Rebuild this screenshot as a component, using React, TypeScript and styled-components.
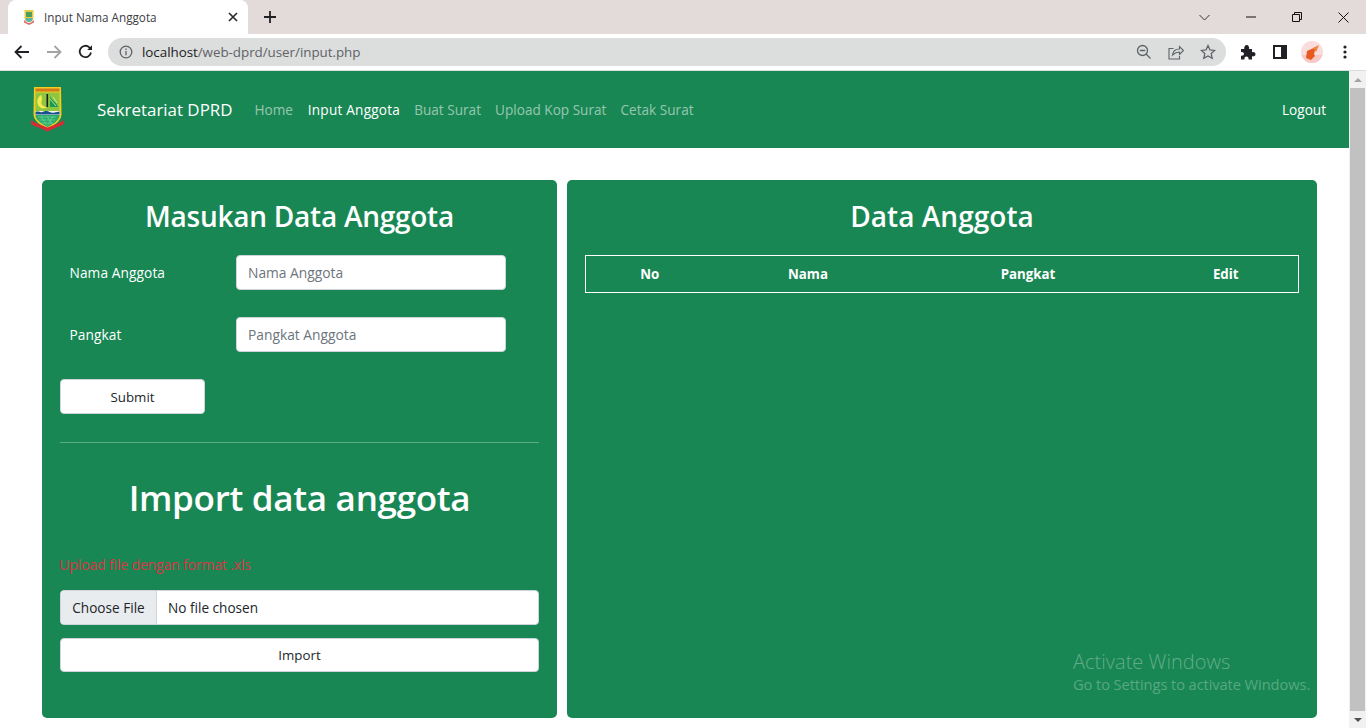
import React from "react";
import styled, { createGlobalStyle } from "styled-components";

const Global = createGlobalStyle`
  html, body { margin: 0; padding: 0; height: 100%; overflow: hidden; background: #fff; }
  body { font-family: "Open Sans", "Noto Sans", "Liberation Sans", sans-serif; }
  * { box-sizing: border-box; }
`;

const Shell = styled.div`
  width: 1366px; height: 728px; display: flex; flex-direction: column; position: relative; overflow: hidden;
`;
const TitleBar = styled.div`
  height: 34px; background: #e3dbd9; display: flex; align-items: flex-end; padding-left: 8px; flex: none;
`;
const Tab = styled.div`
  width: 240px; height: 34px; background: #fff; border-radius: 8px 8px 0 0; display: flex; align-items: center; padding: 0 10px 0 16px; gap: 10px;
`;
const TabTitle = styled.span`
  flex: 1; font-size: 11.7px; color: #3c4043; white-space: nowrap;
`;
const NewTab = styled.div`
  width: 28px; height: 28px; margin: 0 0 3px 8px; display: flex; align-items: center; justify-content: center;
`;
const WindowControls = styled.div`
  margin-left: auto; height: 34px; display: flex; align-items: center;
`;
const WinButton = styled.div<{ $w: number }>`
  width: ${(p) => p.$w}px; display: flex; align-items: center; justify-content: center; height: 28px;
`;
const Toolbar = styled.div`
  height: 37px; flex: none; background: #fff; border-bottom: 1px solid #dadce0; display: flex; align-items: center; padding: 0 11px 1px 14px;
`;
const NavIcons = styled.div`
  display: flex; align-items: center; gap: 16px; width: 94px;
`;
const Omnibox = styled.div`
  width: 1118px; height: 28px; background: #dcdddd; border-radius: 14px; display: flex; align-items: center; padding: 0 10px 0 11px; gap: 9px;
`;
const Url = styled.span`
  flex: 1; font-size: 13.4px; color: #5f6368; letter-spacing: -0.04px;
  b { font-weight: 400; color: #202124; }
`;
const OmniIcons = styled.div`
  display: flex; align-items: center; gap: 16px;
`;
const ToolIcons = styled.div`
  display: flex; align-items: center; margin-left: 14px;
`;
const ToolSlot = styled.div<{ $gap: number }>`
  margin-left: ${(p) => p.$gap}px; display: flex; align-items: center;
`;
const Avatar = styled.div`
  width: 22px; height: 22px; border-radius: 50%; background: #f9dcdc; overflow: hidden; display: flex;
`;
const Viewport = styled.div`
  flex: 1; display: flex; min-height: 0;
`;
const Page = styled.div`
  flex: 1; display: flex; flex-direction: column; background: #fff; min-width: 0;
`;
const Navbar = styled.nav`
  height: 77px; flex: none; background: #198754; display: flex; align-items: center; padding: 0 23px 0 31px;
`;
const Brand = styled.a`
  color: #fff; font-size: 16.9px; margin-left: 33px; margin-right: 22px; white-space: nowrap;
`;
const NavLinks = styled.div`
  display: flex; gap: 14.1px; flex: 1;
`;
const NavLink = styled.a<{ $active?: boolean }>`
  color: ${(p) => (p.$active ? "#fff" : "rgba(255,255,255,.55)")};
  font-size: 13.6px; white-space: nowrap;
  font-weight: ${(p) => (p.$active ? 500 : 400)};
  letter-spacing: ${(p) => (p.$active ? "0.22px" : "0")};
  margin-left: ${(p) => (p.$active ? "0.8px" : "0")};
`;
const Logout = styled.a`
  color: #fff; font-size: 13.6px;
`;
const Content = styled.main`
  flex: 1; display: flex; gap: 10px; padding: 32px 32px 10px 42px; min-height: 0;
`;
const Card = styled.section<{ $w: number }>`
  width: ${(p) => p.$w}px; background: #198754; border-radius: 5px; padding: 17px 18px 0; color: #fff;
`;
const CardTitle = styled.h2<{ $tracking: number }>`
  margin: 0; text-align: center; font-size: 28px; font-weight: 600; line-height: 38px; height: 58px; letter-spacing: ${(p) => p.$tracking}px;
`;
const FormRow = styled.div`
  display: flex; align-items: center; height: 34.5px; margin-bottom: 27.5px; padding-left: 10px;
`;
const FieldLabel = styled.label`
  width: 166px; font-size: 13.7px; font-weight: 500; letter-spacing: 0.1px; margin-left: -0.5px;
`;
const TextField = styled.div`
  width: 270px; height: 34.5px; margin-left: 0.5px; background: #fff; border: 1px solid #ced4da; border-radius: 4px; font-size: 13.8px; color: #6c757d; display: flex; align-items: center; padding: 0 11px 0.5px;
`;
const WhiteButton = styled.button<{ $full?: boolean }>`
  display: block; width: ${(p) => (p.$full ? "100%" : "145px")}; height: ${(p) => (p.$full ? "34px" : "35px")};
  background: #fff; border: 1px solid #ced4da; border-radius: 4px; font: inherit; font-size: 13.3px; color: #212529; padding: 0;
`;
const Divider = styled.hr`
  border: 0; border-top: 1px solid rgba(255,255,255,.3); margin: 28px 0 0;
`;
const BigTitle = styled.h1`
  margin: 30px 0 0; text-align: center; font-size: 35px; font-weight: 600; line-height: 50px; height: 82px; letter-spacing: -0.3px;
`;
const Warning = styled.p`
  margin: 0 0 0 -0.7px; font-size: 13.9px; line-height: 20px; color: #dc3545; height: 35px; letter-spacing: -0.1px;
`;
const FileField = styled.div`
  height: 35px; background: #fff; border: 1px solid #ced4da; border-radius: 4px; display: flex; align-items: stretch; font-size: 13.6px; color: #212529; margin-bottom: 13px; overflow: hidden;
`;
const FileButton = styled.span`
  width: 96px; background: #e9ecef; border-right: 1px solid #ced4da; display: flex; align-items: center; justify-content: center; flex: none;
`;
const FileName = styled.span`
  display: flex; align-items: center; padding-left: 11px;
`;
const DataTable = styled.table`
  width: 713px; border-collapse: collapse; border: 1px solid #fff; table-layout: fixed;
  th { height: 37px; font-size: 13.3px; font-weight: 700; text-align: center; padding: 0; }
`;
const Scrollbar = styled.div`
  width: 17px; flex: none; background: #f1f1f1; display: flex; flex-direction: column; align-items: center;
`;
const ScrollArrow = styled.div<{ $down?: boolean }>`
  height: 17px; flex: none; display: flex; align-items: center; justify-content: center;
  &::before {
    content: ""; border-left: 4px solid transparent; border-right: 4px solid transparent;
    ${(p) => (p.$down ? "border-top: 4px solid #505050;" : "border-bottom: 4px solid #a3a3a3;")}
  }
`;
const ScrollThumb = styled.div`
  width: 15px; flex: 1; background: #c1c1c1;
`;
const Watermark = styled.div`
  position: absolute; left: 1073px; top: 649px; color: rgba(255,255,255,.33); pointer-events: none; white-space: nowrap;
`;
const WatermarkTitle = styled.div`
  font-size: 20px; line-height: 25px; font-weight: 300; letter-spacing: 0.02px;
`;
const WatermarkSub = styled.div`
  font-size: 14.7px; line-height: 20px; letter-spacing: -0.1px; color: rgba(255,255,255,.28);
`;

const Crest = () => (
  <svg width="33" height="46" viewBox="0 0 33 46" style={{ flex: "none", display: "block" }}>
    <path d="M3 0h27l.5 27c0 7-7 11-14 15C9.500 38 2.500 34 2.500 27z" fill="#f4cb1f" />
    <path d="M4.500 1.500h24v3h-24z" fill="#cf7a1c" />
    <path d="M4.500 5.500h24V24h-24z" fill="#8ec63f" />
    <path d="M10 8c-5 3-5 10 0 13 3 1 5 0 6-1-4 0-7-3-5-7 0-2 0-3-1-5z" fill="#f6ea4f" />
    <rect x="15.500" y="7" width="1.600" height="13" fill="#1c1c1c" />
    <path d="M19 9c1 4 6 5 8 11h-8z" fill="#179a55" />
    <path d="M19 12l6 7M22 10l4 6" stroke="#e9f0a0" strokeWidth="0.800" />
    <path d="M4.500 24h24v4h-24z" fill="#f6f6f0" />
    <path d="M4.500 25c3-1.500 4 1 7 0s4-1.500 7 0 5 .5 10-.5v3h-24z" fill="#17508f" />
    <path d="M4.500 28h24c0 5-6 9-12 12-6-3-12-7-12-12z" fill="#27ad6a" />
    <path d="M7 30l18 0M8 33h16M10 36h12M10 29l6 10M16 29l5 8M22 29l-5 9" stroke="#8fdcae" strokeWidth="0.500" />
    <path d="M.5 33c2 2 6 4 8 4.500l8 3 8-3c2-.5 6-2.500 8-4.500l.5 4-4.500 2.500-3.500 1-8.500 4-8.500-4-3.500-1L0 37z" fill="#d92b33" />
  </svg>
);

const Favicon = () => (
  <svg width="10" height="15" viewBox="0 0 10 15" style={{ flex: "none", display: "block" }}>
    <path d="M.5 0h9v8c0 2-2 3-4.500 4C2.500 11 .5 10 .5 8z" fill="#e8cc46" />
    <path d="M2 2h6v5H2z" fill="#4f9d5d" />
    <path d="M1.500 8h7v2c0 1-2 2-3.500 2s-3.500-1-3.500-2z" fill="#5fb5a0" />
    <path d="M0 10c2 2 3.500 3 5 3s3-1 5-3v2.500L5 15 0 12.500z" fill="#e46a62" />
  </svg>
);

const Stroke = ({ w = 16, h = 16, vb = "0 0 16 16", color = "#202124", sw = 1.5, children }: any) => (
  <svg width={w} height={h} viewBox={vb} fill="none" stroke={color} strokeWidth={sw} style={{ flex: "none", display: "block" }}>
    {children}
  </svg>
);

export default function App() {
  return (
    <Shell>
      <Global />
      <TitleBar>
        <Tab>
          <Favicon />
          <TabTitle>Input Nama Anggota</TabTitle>
          <Stroke w={10} h={10} vb="0 0 10 10" sw={1.7} color="#2b2b2b"><path d="M1 1l8 8M9 1l-8 8" /></Stroke>
        </Tab>
        <NewTab>
          <Stroke w={12} h={12} vb="0 0 12 12" sw={1.800}><path d="M6 0v12M0 6h12" /></Stroke>
        </NewTab>
        <WindowControls>
          <WinButton $w={40}><Stroke w={11} h={7} vb="0 0 11 7" sw={1} color="#333"><path d="M.5 1l5 5 5-5" /></Stroke></WinButton>
          <WinButton $w={46} style={{ marginLeft: 4 }}><Stroke w={10} h={2} vb="0 0 10 2" sw={1} color="#111"><path d="M0 1h10" /></Stroke></WinButton>
          <WinButton $w={46}><Stroke w={10} h={10} vb="0 0 10 10" sw={1} color="#111"><path d="M.5 2.500h7v7h-7zM2.500 2.500v-2h7v7h-2" /></Stroke></WinButton>
          <WinButton $w={46}><Stroke w={11} h={11} vb="0 0 11 11" sw={1} color="#111"><path d="M.5.5l10 10M10.500.5l-10 10" /></Stroke></WinButton>
        </WindowControls>
      </TitleBar>
      <Toolbar>
        <NavIcons>
          <Stroke w={16} h={14} vb="0 0 16 14" sw={1.800}><path d="M15 7H2M7.500 1 1.500 7l6 6" /></Stroke>
          <Stroke w={16} h={14} vb="0 0 16 14" sw={1.800} color="#a2a4a6"><path d="M1 7h13M8.500 1l6 6-6 6" /></Stroke>
          <Stroke w={15} h={15} vb="0 0 15 15" sw={1.800}><path d="M13 8.500A5.700 5.700 0 1 1 11.300 3.300L13.500 5.500" /><path d="M14 1.200V6H9.200z" fill="#202124" stroke="none" /></Stroke>
        </NavIcons>
        <Omnibox>
          <Stroke w={14} h={14} vb="0 0 14 14" sw={1.300} color="#5f6368"><circle cx="7" cy="7" r="5.800" /><path d="M7 6v4.200M7 3.500v1.500" /></Stroke>
          <Url><b>localhost</b>/web-dprd/user/input.php</Url>
          <OmniIcons>
            <Stroke w={16} h={16} vb="0 0 16 16" sw={1.300} color="#5f6368"><circle cx="6.500" cy="6.500" r="5" /><path d="M3.800 6.500h5.400M10 10l4.500 4.500" /></Stroke>
            <Stroke w={16} h={16} vb="0 0 16 16" sw={1.100} color="#5f6368"><path d="M5.500 4.500H1v10.500h10.500v-3" /><path d="M4.500 11c.5-4 3-6 7-6V2.500l4 4-4 4V8c-3 0-5 1-7 3z" /></Stroke>
            <Stroke w={16} h={16} vb="0 0 16 16" sw={1.300} color="#5f6368"><path d="M8 1.500l2 4.400 4.700.5-3.500 3.200 1 4.700L8 11.900l-4.200 2.400 1-4.700L1.300 6.400 6 5.900z" /></Stroke>
          </OmniIcons>
        </Omnibox>
        <ToolIcons>
          <svg width="16" height="16" viewBox="0 0 16 16" style={{ flex: "none" }}>
            <path fill="#202124" d="M1 5h3.200C4 3 5 1 6.700 1s2.800 2 2.300 4h3v3.200c2-.5 3.500.4 3.500 2s-1.500 2.600-3.500 2.100V15.500H8.500c.4-2-.6-3-2-3s-2.400 1-2 3H1v-3.800c1.800.3 3-.6 3-1.900S2.800 7.600 1 8z" />
          </svg>
          <ToolSlot $gap={17}>
            <svg width="14" height="14" viewBox="0 0 14 14" style={{ flex: "none" }}>
              <path fill="#202124" d="M0 0h14v14H0z" />
              <path fill="#fff" d="M2 2h6v10H2z" />
            </svg>
          </ToolSlot>
          <ToolSlot $gap={14}>
            <Avatar>
              <svg width="22" height="22" viewBox="0 0 22 22">
                <path d="M0 14h22v8H0z" fill="#f6c9c6" />
                <path d="M6 10l9-4-2 7 1 2-4 4-5-2z" fill="#e8591d" />
                <path d="M12 7l6-3-3 7z" fill="#f2843c" />
              </svg>
            </Avatar>
          </ToolSlot>
          <ToolSlot $gap={20}>
            <svg width="4" height="14" viewBox="0 0 4 14" style={{ flex: "none" }}>
              <circle cx="2" cy="2" r="1.600" fill="#202124" /><circle cx="2" cy="7" r="1.600" fill="#202124" /><circle cx="2" cy="12" r="1.600" fill="#202124" />
            </svg>
          </ToolSlot>
        </ToolIcons>
      </Toolbar>
      <Viewport>
        <Page>
          <Navbar>
            <Crest />
            <Brand>Sekretariat DPRD</Brand>
            <NavLinks>
              <NavLink>Home</NavLink>
              <NavLink $active>Input Anggota</NavLink>
              <NavLink>Buat Surat</NavLink>
              <NavLink>Upload Kop Surat</NavLink>
              <NavLink>Cetak Surat</NavLink>
            </NavLinks>
            <Logout>Logout</Logout>
          </Navbar>
          <Content>
            <Card $w={515}>
              <CardTitle $tracking={-0.25}>Masukan Data Anggota</CardTitle>
              <FormRow>
                <FieldLabel>Nama Anggota</FieldLabel>
                <TextField>Nama Anggota</TextField>
              </FormRow>
              <FormRow>
                <FieldLabel>Pangkat</FieldLabel>
                <TextField>Pangkat Anggota</TextField>
              </FormRow>
              <WhiteButton>Submit</WhiteButton>
              <Divider />
              <BigTitle>Import data anggota</BigTitle>
              <Warning>Upload file dengan format .xls</Warning>
              <FileField>
                <FileButton>Choose File</FileButton>
                <FileName>No file chosen</FileName>
              </FileField>
              <WhiteButton $full>Import</WhiteButton>
            </Card>
            <Card $w={750}>
              <CardTitle $tracking={0.05}>Data Anggota</CardTitle>
              <DataTable>
                <colgroup>
                  <col width="128" /><col width="189" /><col width="251" /><col width="145" />
                </colgroup>
                <thead>
                  <tr><th>No</th><th>Nama</th><th>Pangkat</th><th>Edit</th></tr>
                </thead>
              </DataTable>
            </Card>
          </Content>
        </Page>
        <Scrollbar>
          <ScrollArrow />
          <ScrollThumb />
          <ScrollArrow $down />
        </Scrollbar>
      </Viewport>
      <Watermark>
        <WatermarkTitle>Activate Windows</WatermarkTitle>
        <WatermarkSub>Go to Settings to activate Windows.</WatermarkSub>
      </Watermark>
    </Shell>
  );
}
